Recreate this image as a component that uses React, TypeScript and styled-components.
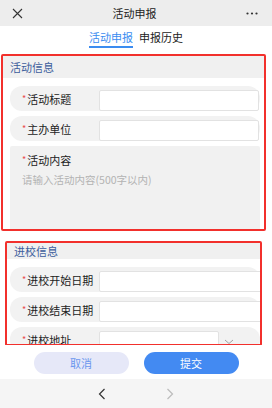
import styled, { createGlobalStyle } from "styled-components";

const Global = createGlobalStyle`
  html, body { margin: 0; padding: 0; }
  body {
    font-family: "Noto Sans CJK SC", "Noto Sans", sans-serif;
    background: #ffffff;
  }
  * { box-sizing: border-box; }
`;

const Page = styled.div`
  width: 272px;
  height: 408px;
  display: flex;
  flex-direction: column;
  overflow: hidden;
  background: #fff;
`;

const TitleBar = styled.div`
  height: 26px;
  flex-shrink: 0;
  display: flex;
  align-items: center;
  justify-content: space-between;
  padding: 0 14px 0 12px;
  background: #ededed;
  color: #222;
`;

const Title = styled.div`
  font-size: 11px;
  line-height: 1;
`;

const Tabs = styled.div`
  height: 22px;
  flex-shrink: 0;
  display: flex;
  justify-content: center;
  gap: 6px;
  padding-top: 4px;
`;

const Tab = styled.div<{ active?: boolean }>`
  font-size: 11px;
  line-height: 14px;
  height: 18px;
  color: ${({ active }) => (active ? "#3b8cf0" : "#222")};
  border-bottom: 2px solid ${({ active }) => (active ? "#3b8cf0" : "transparent")};
`;

const Content = styled.div`
  flex: 1;
  overflow: hidden;
  display: flex;
  flex-direction: column;
`;

const Section = styled.div<{ ml: number; w: number; mt: number; h: number }>`
  margin-left: ${({ ml }) => ml}px;
  margin-top: ${({ mt }) => mt}px;
  width: ${({ w }) => w}px;
  height: ${({ h }) => h}px;
  flex-shrink: 0;
  border: 2px solid #f2302c;
  border-radius: 2px;
  overflow: hidden;
`;

const SectionHead = styled.div<{ h: number }>`
  height: ${({ h }) => h}px;
  background: #f0f0f0;
  color: #3c5d9c;
  font-size: 11px;
  display: flex;
  align-items: center;
  padding-left: 7px;
`;

const Rows = styled.div<{ pl: number; pt: number }>`
  display: flex;
  flex-direction: column;
  gap: 5px;
  padding: ${({ pt }) => pt}px 0 0 ${({ pl }) => pl}px;
  width: 262px;
`;

const Row = styled.div`
  height: 25px;
  width: 250px;
  display: flex;
  align-items: center;
  background: #f2f2f2;
  border-radius: 12px;
  padding-left: 12px;
`;

const Label = styled.div`
  width: 77px;
  flex-shrink: 0;
  font-size: 11px;
  color: #222;
  white-space: nowrap;
  &::before {
    content: "*";
    color: #e94b4b;
    font-size: 9px;
    margin-right: 1px;
    vertical-align: 2px;
  }
`;

const Input = styled.div<{ w?: number }>`
  width: ${({ w }) => (w ? `${w}px` : "160px")};
  height: 21px;
  background: #fff;
  border: 1px solid #e2e2e2;
  border-radius: 2px;
  margin-top: 3px;
  flex-shrink: 0;
`;

const Chevron = styled.div`
  margin-left: 5px;
  margin-top: 4px;
  display: flex;
`;

const TextArea = styled.div`
  height: 85px;
  width: 250px;
  background: #f1f1f1;
  border-radius: 2px;
  padding: 6px 12px;
`;

const Placeholder = styled.div`
  margin-top: 4px;
  font-size: 10.5px;
  color: #b3b3b3;
`;

const Actions = styled.div`
  height: 34px;
  flex-shrink: 0;
  display: flex;
  justify-content: center;
  align-items: flex-start;
  padding-top: 7px;
  gap: 15px;
`;

const Button = styled.div<{ primary?: boolean }>`
  width: 95px;
  height: 22px;
  border-radius: 11px;
  display: flex;
  align-items: center;
  justify-content: center;
  font-size: 11px;
  background: ${({ primary }) => (primary ? "#438af2" : "#e6e8f8")};
  color: ${({ primary }) => (primary ? "#fff" : "#6b97ee")};
`;

const NavBar = styled.div`
  height: 29px;
  flex-shrink: 0;
  background: #f5f5f5;
  display: flex;
  justify-content: center;
  align-items: center;
  gap: 60px;
`;

export default function App() {
  return (
    <Page>
      <Global />
      <TitleBar>
        <svg width="11" height="11" viewBox="0 0 11 11">
          <path d="M1 1L10 10M10 1L1 10" stroke="#333" strokeWidth="1.1" />
        </svg>
        <Title>活动申报</Title>
        <svg width="12" height="3" viewBox="0 0 12 3">
          <circle cx="1.5" cy="1.5" r="1.1" fill="#333" />
          <circle cx="6" cy="1.5" r="1.1" fill="#333" />
          <circle cx="10.5" cy="1.5" r="1.1" fill="#333" />
        </svg>
      </TitleBar>
      <Tabs>
        <Tab active>活动申报</Tab>
        <Tab>申报历史</Tab>
      </Tabs>
      <Content>
        <Section ml={1} mt={6} w={265} h={177}>
          <SectionHead h={22}>活动信息</SectionHead>
          <Rows pl={7} pt={8}>
            <Row>
              <Label>活动标题</Label>
              <Input />
            </Row>
            <Row>
              <Label>主办单位</Label>
              <Input />
            </Row>
            <TextArea>
              <Label>活动内容</Label>
              <Placeholder>请输入活动内容(500字以内)</Placeholder>
            </TextArea>
          </Rows>
        </Section>
        <Section ml={5} mt={10} w={257} h={105}>
          <SectionHead h={16}>进校信息</SectionHead>
          <Rows pl={3} pt={8}>
            <Row>
              <Label>进校开始日期</Label>
              <Input w={165} />
            </Row>
            <Row>
              <Label>进校结束日期</Label>
              <Input w={165} />
            </Row>
            <Row>
              <Label>进校地址</Label>
              <Input w={120} />
              <Chevron>
                <svg width="10" height="6" viewBox="0 0 10 6">
                  <path d="M1 1L5 4.5L9 1" stroke="#999" strokeWidth="0.9" fill="none" />
                </svg>
              </Chevron>
            </Row>
          </Rows>
        </Section>
      </Content>
      <Actions>
        <Button>取消</Button>
        <Button primary>提交</Button>
      </Actions>
      <NavBar>
        <svg width="8" height="12" viewBox="0 0 8 12">
          <path d="M6.5 1L1.5 6L6.5 11" stroke="#333" strokeWidth="1.2" fill="none" />
        </svg>
        <svg width="8" height="12" viewBox="0 0 8 12">
          <path d="M1.5 1L6.5 6L1.5 11" stroke="#bbb" strokeWidth="1.2" fill="none" />
        </svg>
      </NavBar>
    </Page>
  );
}
